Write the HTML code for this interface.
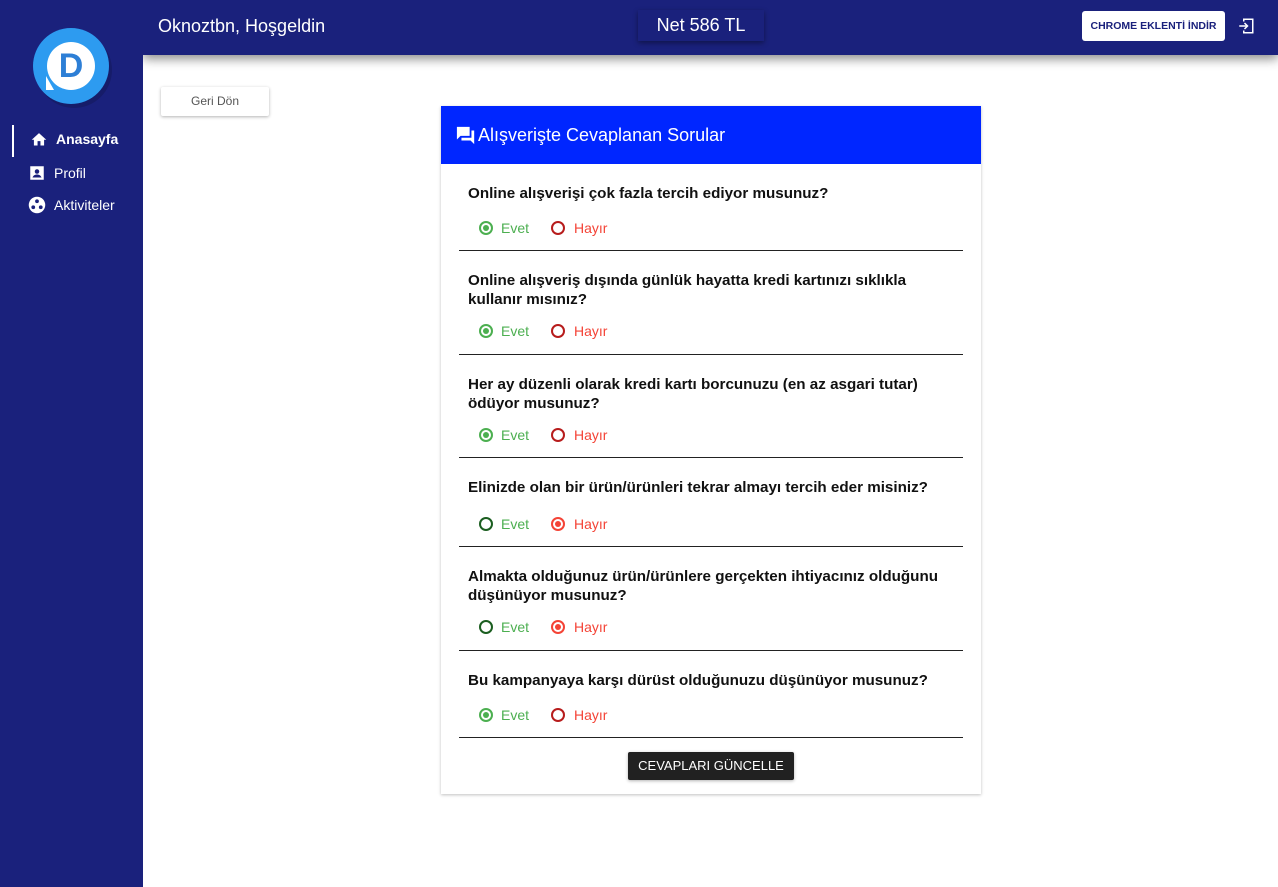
<!DOCTYPE html>
<html><head><meta charset="utf-8"><style>
*{box-sizing:border-box;margin:0;padding:0}
body{width:1278px;height:887px;background:#fff;font-family:"Liberation Sans",Roboto,sans-serif;position:relative;overflow:hidden}
.side{position:absolute;left:0;top:0;width:143px;height:887px;background:#1a217c;z-index:3}
.hdr{position:absolute;left:143px;top:0;right:0;height:55px;background:#1a217c;box-shadow:0 4px 10px rgba(0,0,0,.45);z-index:2}
.nav{position:absolute;left:28px;color:#fff;font-size:14px;display:flex;align-items:center;gap:8px}
.card{position:absolute;left:441px;top:106px;width:540px;height:688px;background:#fff;box-shadow:0 1px 3px rgba(0,0,0,.25)}
.ch{height:58px;background:#0026ff;color:#fff;font-size:18px;display:flex;align-items:center;padding-left:14px}
.blk{position:absolute;left:18px;width:504px;border-bottom:1px solid #222}
.q{position:absolute;left:9px;top:20px;width:480px;font-size:15.2px;font-weight:bold;line-height:19px;color:#111}
.r{position:absolute;left:20px;height:18px;display:flex;align-items:center;font-size:14px}
.c{width:14px;height:14px;border-radius:50%;border:2px solid;display:inline-block;position:relative}
.c.on::after{content:"";position:absolute;left:2px;top:2px;width:6px;height:6px;border-radius:50%;background:currentColor}
</style></head><body>
<div class="side">
  <div style="position:absolute;left:36px;top:32px;width:76px;height:76px;border-radius:50%;background:rgba(0,0,0,.15)"></div>
  <div style="position:absolute;left:33px;top:28px;width:76px;height:76px;border-radius:50%;background:#2d9bf0"></div>
  <div style="position:absolute;left:47px;top:42px;width:48px;height:48px;border-radius:50%;background:#fff"></div>
  <div style="position:absolute;left:46px;top:76px;width:0;height:0;border-left:8px solid #fff;border-top:14px solid transparent"></div>
  <div style="position:absolute;left:47px;top:47px;width:48px;text-align:center;font-size:34px;line-height:38px;font-weight:bold;color:#2d7fd6">D</div>
  <div style="position:absolute;left:12px;top:125px;width:2px;height:32px;background:#fff"></div>
  <div class="nav" style="top:131px;left:30px;font-weight:bold"><svg width="18" height="16" viewBox="0 0 24 22"><path d="M10 20v-6h4v6h5v-8h3L12 3 2 12h3v8z" fill="#fff"/></svg>Anasayfa</div>
  <div class="nav" style="top:164px"><svg width="18" height="18" viewBox="0 0 24 24"><path d="M3 3h18v18H3z" fill="#fff"/><circle cx="12" cy="10" r="3" fill="#1a217c"/><path d="M6 18c1-3 4-4 6-4s5 1 6 4z" fill="#1a217c"/></svg>Profil</div>
  <div class="nav" style="top:196px"><svg width="18" height="18" viewBox="0 0 24 24"><circle cx="12" cy="12" r="11" fill="#fff"/><circle cx="12" cy="7" r="2.5" fill="#1a217c"/><circle cx="7" cy="15" r="2.5" fill="#1a217c"/><circle cx="17" cy="15" r="2.5" fill="#1a217c"/></svg>Aktiviteler</div>
</div>
<div class="hdr">
  <div style="position:absolute;left:15px;top:16px;color:#fff;font-size:18px">Oknoztbn, Hoşgeldin</div>
  <div style="position:absolute;left:495px;top:10px;width:126px;height:31px;box-shadow:0 2px 5px rgba(0,0,0,.4);color:#fff;font-size:18px;text-align:center;line-height:31px">Net 586 TL</div>
  <div style="position:absolute;left:939px;top:11px;width:143px;height:30px;background:#fff;border-radius:3px;color:#1a217c;font-size:10.5px;font-weight:bold;text-align:center;line-height:30px">CHROME EKLENTİ İNDİR</div>
  <svg style="position:absolute;left:1094px;top:17px" width="18" height="18" viewBox="0 0 24 24"><path d="M9 4V3h12v18H9v-1" fill="none" stroke="#fff" stroke-width="2"/><path d="M3 12h11M10 8l4 4-4 4" fill="none" stroke="#fff" stroke-width="2"/><path d="M9 4v2M9 18v2" stroke="#fff" stroke-width="2"/></svg>
</div>
<div style="position:absolute;left:161px;top:87px;width:108px;height:29px;box-shadow:0 1px 3px rgba(0,0,0,.3);border-radius:2px;text-align:center;line-height:29px;font-size:12px;color:#555">Geri Dön</div>
<div class="card">
  <div class="ch"><svg width="22" height="20" viewBox="0 0 24 22" style="margin-right:1px"><path d="M2 2h14v10H6l-4 4z" fill="#fff"/><path d="M18 6h3v15l-4-4H7v-3h11z" fill="#fff"/></svg>Alışverişte Cevaplanan Sorular</div>
</div>
<div id="qs"></div>
<div style="position:absolute;left:628px;top:752px;width:166px;height:28px;background:#212121;color:#fff;font-size:13px;text-align:center;line-height:28px;border-radius:2px;box-shadow:0 1px 3px rgba(0,0,0,.3)">CEVAPLARI GÜNCELLE</div>
<script>
var d=[[164,87,"Online alışverişi çok fazla tercih ediyor musunuz?",1,1],
[251,104,"Online alışveriş dışında günlük hayatta kredi kartınızı sıklıkla kullanır mısınız?",2,1],
[355,103,"Her ay düzenli olarak kredi kartı borcunuzu (en az asgari tutar) ödüyor musunuz?",2,1],
[458,89,"Elinizde olan bir ürün/ürünleri tekrar almayı tercih eder misiniz?",1,0],
[547,104,"Almakta olduğunuz ürün/ürünlere gerçekten ihtiyacınız olduğunu düşünüyor musunuz?",2,0],
[651,87,"Bu kampanyaya karşı dürüst olduğunuzu düşünüyor musunuz?",1,1]];
var h="";d.forEach(function(a){var rt=a[3]==1?(a[1]>88?57:55):71;
h+='<div class="blk" style="left:459px;top:'+a[0]+'px;height:'+a[1]+'px"><div class="q">'+a[2]+'</div><div class="r" style="top:'+rt+'px"><span class="c'+(a[4]?' on':'')+'" style="color:'+(a[4]?'#4caf50':'#1b5e20')+';margin-left:0px"></span><span style="color:#4caf50;margin-left:8px">Evet</span><span class="c'+(a[4]?'':' on')+'" style="color:'+(a[4]?'#b71c1c':'#f44336')+';margin-left:22px"></span><span style="color:#f44336;margin-left:9px">Hayır</span></div></div>';});
document.getElementById("qs").innerHTML=h;
</script>
</body></html>
